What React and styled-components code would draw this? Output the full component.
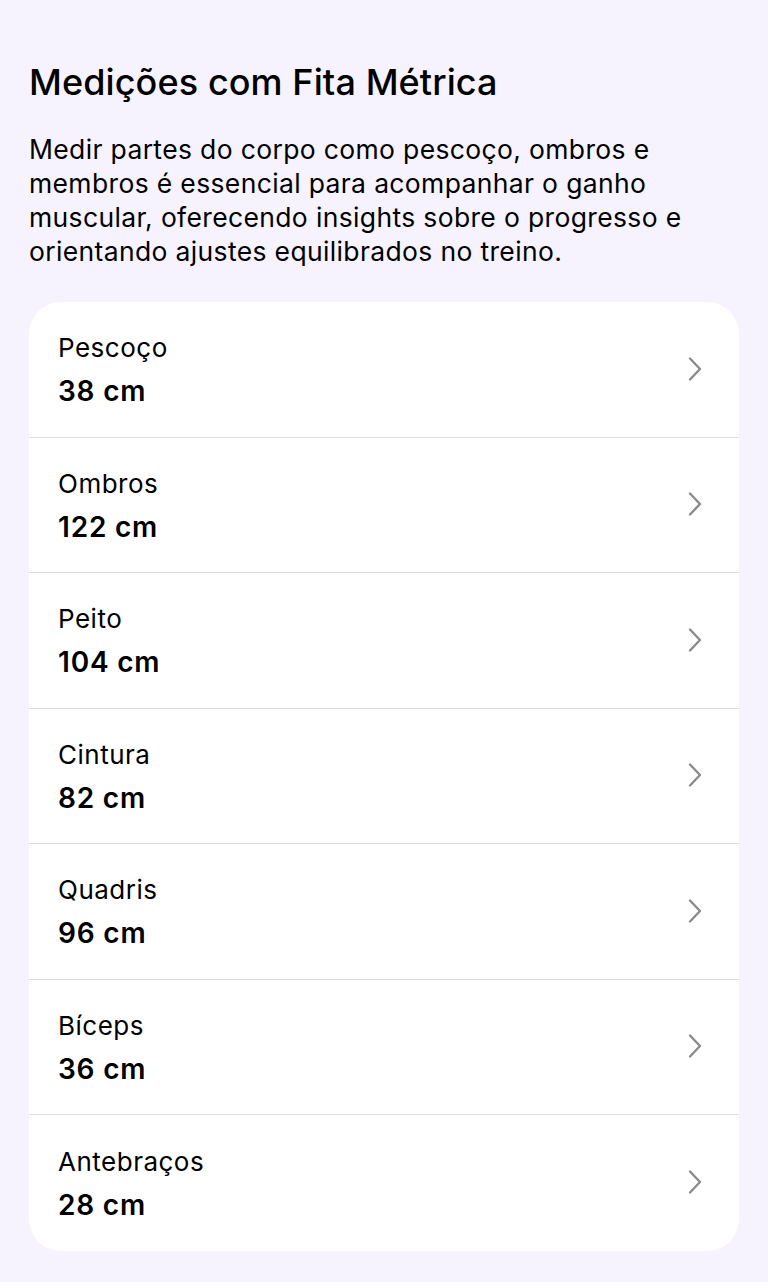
import React from "react";
import styled, { createGlobalStyle } from "styled-components";

const GlobalStyle = createGlobalStyle`
 html, body {
  margin: 0;
  padding: 0;
  background: #f6f3fe;
 }
 body {
  font-family: Inter, "Liberation Sans", sans-serif;
  color: #000000;
  -webkit-font-smoothing: antialiased;
 }
`;

const measurements = [
 { label: "Pescoço", value: "38 cm" },
 { label: "Ombros", value: "122 cm" },
 { label: "Peito", value: "104 cm" },
 { label: "Cintura", value: "82 cm" },
 { label: "Quadris", value: "96 cm" },
 { label: "Bíceps", value: "36 cm" },
 { label: "Antebraços", value: "28 cm" },
];

const Chevron = () => (
 <ChevronIcon viewBox="0 0 16 26" fill="none">
  <path
   d="M3 2.5 L13 13 L3 23.5"
   stroke="#8a8a8e"
   strokeWidth="2.4"
   strokeLinecap="round"
   strokeLinejoin="round"
  />
 </ChevronIcon>
);

const App = () => {
 return (
  <Page>
   <GlobalStyle />
   <Title>Medições com Fita Métrica</Title>
   <Intro>
    Medir partes do corpo como pescoço, ombros e membros é essencial para
    acompanhar o ganho muscular, oferecendo insights sobre o progresso e
    orientando ajustes equilibrados no treino.
   </Intro>
   <Card>
    {measurements.map((m) => (
     <Row key={m.label}>
      <RowText>
       <Label>{m.label}</Label>
       <Value>{m.value}</Value>
      </RowText>
      <Chevron />
     </Row>
    ))}
   </Card>
  </Page>
 );
};
export default App;

const Page = styled.div`
 width: 768px;
 min-height: 1282px;
 display: flex;
 flex-direction: column;
 padding: 58px 29px 33px 29px;
 box-sizing: border-box;
 background: #f6f3fe;
`;
const Title = styled.h1`
 margin: 0;
 font-size: 36px;
 font-weight: 500;
 line-height: 48px;
 letter-spacing: 0.1px;
`;
const Intro = styled.p`
 margin: 26px 0 0 0;
 width: 700px;
 font-size: 26.5px;
 font-weight: 400;
 line-height: 34px;
 letter-spacing: 0.35px;
`;
const Card = styled.div`
 margin-top: 34px;
 display: flex;
 flex-direction: column;
 border-radius: 32px;
 background: #ffffff;
 overflow: hidden;
`;
const Row = styled.div`
 height: 135.5px;
 display: flex;
 flex-direction: row;
 align-items: center;
 justify-content: space-between;
 padding: 1px 34px 0 29px;
 box-sizing: border-box;
 border-bottom: 1px solid #dcdcde;
 &:last-child {
  border-bottom: none;
 }
`;
const RowText = styled.div`
 display: flex;
 flex-direction: column;
 gap: 9px;
`;
const Label = styled.div`
 font-size: 26px;
 line-height: 34px;
 font-weight: 400;
 letter-spacing: 0.5px;
`;
const Value = styled.div`
 font-size: 28px;
 line-height: 34px;
 font-weight: 600;
 letter-spacing: 0.8px;
`;
const ChevronIcon = styled.svg`
 width: 16px;
 height: 26px;
 flex-shrink: 0;
 margin: -2px 2px 0 0;
`;
